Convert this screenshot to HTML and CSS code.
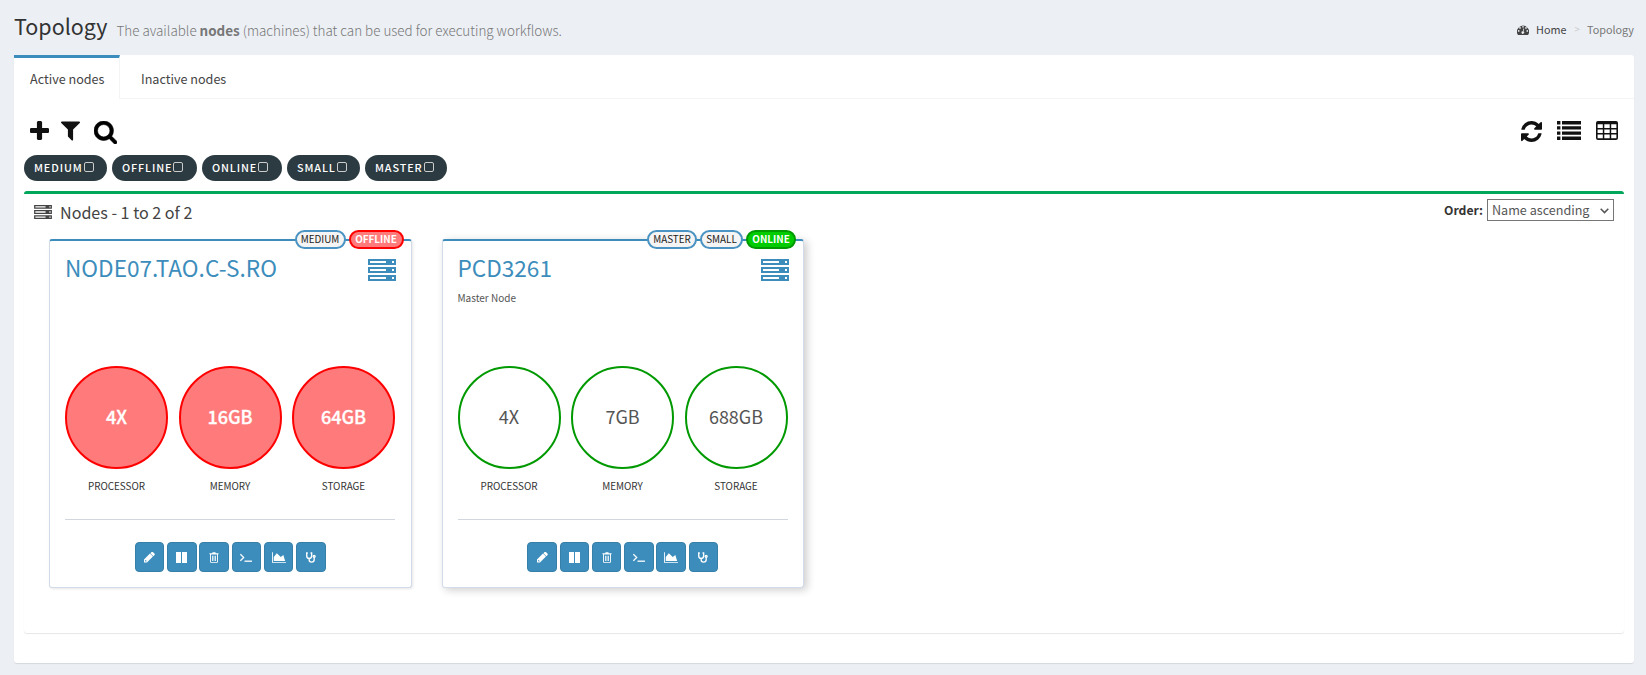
FILE: index.html
```html
<!DOCTYPE html>
<html lang="en">
<head>
<meta charset="utf-8">
<title>Topology</title>
<link rel="stylesheet" href="styles.css">
</head>
<body>
<svg class="sprite" aria-hidden="true">
  <symbol id="plus" viewBox="192 128 1408 1408"><path d="M1600 736v192q0 40-28 68t-68 28h-416v416q0 40-28 68t-68 28h-192q-40 0-68-28t-28-68v-416h-416q-40 0-68-28t-28-68v-192q0-40 28-68t68-28h416v-416q0-40 28-68t68-28h192q40 0 68 28t28 68v416h416q40 0 68 28t28 68z"/></symbol>
  <symbol id="filter" viewBox="192 256 1408 1408"><path d="M1595 295q17 41-14 70l-493 493v742q0 42-39 59-13 5-25 5-27 0-45-19l-256-256q-19-19-19-45v-486l-493-493q-31-29-14-70 17-39 59-39h1280q42 0 59 39z"/></symbol>
  <symbol id="search" viewBox="64 128 1664 1664"><path stroke="currentColor" stroke-width="40" d="M1216 832q0-185-131.5-316.500t-316.500-131.500-316.500 131.500-131.500 316.500 131.500 316.500 316.500 131.500 316.500-131.500 131.500-316.500zm512 832q0 52-38 90t-90 38q-54 0-90-38l-343-342q-179 124-399 124-143 0-273.500-55.500t-225-150-150-225-55.500-273.500 55.500-273.500 150-225 225-150 273.500-55.500 273.500 55.500 225 150 150 225 55.500 273.500q0 220-124 399l343 343q37 37 37 90z"/></symbol>
  <symbol id="refresh" viewBox="128 128 1536 1536"><path d="M1639 1056q0 5-1 7-64 268-268 434.500t-478 166.500q-146 0-282.500-55t-243.500-157l-129 129q-19 19-45 19t-45-19-19-45v-448q0-26 19-45t45-19h448q26 0 45 19t19 45-19 45l-137 137q71 66 161 102t187 36q134 0 250-65t186-179q11-17 53-117 8-23 30-23h192q13 0 22.500 9.500t9.500 22.500zm25-800v448q0 26-19 45t-45 19h-448q-26 0-45-19t-19-45 19-45l138-138q-148-137-349-137-134 0-250 65t-186 179q-11 17-53 117-8 23-30 23h-199q-13 0-22.500-9.500t-9.500-22.500v-7q65-268 270-434.500t480-166.500q146 0 284 55.500t245 156.500l130-129q19-19 45-19t45 19 19 45z"/></symbol>
  <symbol id="list" viewBox="0 0 24 19"><path d="M0 0h3.400v3.400H0zM0 5.200h3.400v3.400H0zM0 10.400h3.400v3.400H0zM0 15.600h3.400V19H0zM5 0h19v3.400H5zM5 5.200h19v3.400H5zM5 10.400h19v3.400H5zM5 15.600h19V19H5z"/></symbol>
  <symbol id="table" viewBox="0 0 22 19"><path fill-rule="evenodd" d="M2 0h18a2 2 0 0 1 2 2v15a2 2 0 0 1-2 2H2a2 2 0 0 1-2-2V2a2 2 0 0 1 2-2zM1.600 3.200v3.900h5.200V3.200zM8.300 3.200v3.900h5.400V3.200zM15.200 3.200v3.900h5.200V3.200zM1.600 8.400v3.600h5.200V8.400zM8.300 8.400v3.600h5.400V8.400zM15.200 8.400v3.600h5.200V8.400zM1.600 13.400v3.800h5.200v-3.800zM8.300 13.400v3.800h5.400v-3.800zM15.200 13.400v3.800h5.200v-3.800z"/></symbol>
  <symbol id="server" viewBox="0 0 28 22"><path fill-rule="evenodd" d="M0 0h28v6H0zM2 2v2h16V2zM24 2v2h2V2zM0 8h28v6H0zM2 10v2h16v-2zM24 10v2h2v-2zM0 16h28v6H0zM2 18v2h16v-2zM24 18v2h2v-2z"/></symbol>
  <symbol id="gauge" viewBox="0 0 12 10"><path fill-rule="evenodd" d="M1 10A6 6 0 1 1 11 10zM6 .900a.850.850 0 1 0 0 1.700.850.850 0 0 0 0-1.700zM3 2.100a.850.850 0 1 0 0 1.700.850.850 0 0 0 0-1.700zM9 2.100a.850.850 0 1 0 0 1.700.850.850 0 0 0 0-1.700zM1.700 5.100a.850.850 0 1 0 0 1.700.850.850 0 0 0 0-1.700zM10.300 5.100a.850.850 0 1 0 0 1.700.850.850 0 0 0 0-1.700zM6.500 3.400l-.700 2.800a1.300 1.300 0 1 0 .700.200l.700-2.800z"/></symbol>
  <symbol id="pencil" viewBox="128 256 1536 1408"><path d="M420 1536l80-80-150-150-80 80v70h80v80h70zM960 416l416 416-832 832h-416v-416zm683 96q0 53-37 90l-166 166-416-416 166-165q36-38 90-38 53 0 91 38l235 234q37 39 37 91z"/></symbol>
  <symbol id="columns" viewBox="0 0 11 11"><path d="M0 0h5v11H0zM6 0h5v11H6z"/></symbol>
  <symbol id="trash" viewBox="0 0 11 12"><path fill-rule="evenodd" d="M3.500 1.300L4 .300h3l.500 1H10.500v1.200H9.800v8.200c0 .8-.5 1.300-1.200 1.300H2.400c-.7 0-1.200-.5-1.200-1.300V2.500H.5V1.300zM2.200 2.600v8.200c0 .2.100.3.300.3h6c.2 0 .3-.1.300-.3V2.600zM3.300 4h.9v5.800h-.900zM5.050 4h.9v5.800h-.900zM6.800 4h.9v5.800h-.900z"/></symbol>
  <symbol id="terminal" viewBox="64 384 1664 1152"><path stroke="currentColor" stroke-width="50" d="M649 983l-466 466q-10 10-23 10t-23-10l-50-50q-10-10-10-23t10-23l393-393-393-393q-10-10-10-23t10-23l50-50q10-10 23-10t23 10l466 466q10 10 10 23t-10 23zm1079 457v64q0 14-9 23t-23 9h-960q-14 0-23-9t-9-23v-64q0-14 9-23t23-9h960q14 0 23 9t9 23z"/></symbol>
  <symbol id="chart" viewBox="0 128 2048 1536"><path d="M2048 1536v128h-2048v-1536h128v1408h1920zm-384-1024l256 896h-1664v-576l448-576 576 576z"/></symbol>
  <symbol id="stethoscope" viewBox="0 0 11 12"><g fill="none" stroke="currentColor" stroke-width="1.500"><path d="M2 1H.8v3.300C.8 6 1.900 7 3.500 7s2.700-1 2.700-2.700V1H5M3.500 7v1.800c0 1.400 1 2.300 2.600 2.300s2.900-.9 2.900-2.500V5.800"/><circle cx="9" cy="4.700" r="1.050"/></g></symbol>
</svg>

<header class="page-header">
  <h1>Topology</h1>
  <p>The available <b>nodes</b> (machines) that can be used for executing workflows.</p>
  <nav class="breadcrumb">
    <svg class="i-gauge"><use href="#gauge"/></svg><span class="home">Home</span><span class="sep">&gt;</span><span class="here">Topology</span>
  </nav>
</header>

<main class="panel">
  <div class="tabs">
    <div class="tab tab-active">Active nodes</div>
    <div class="tab tab-other">Inactive nodes</div>
  </div>
  <div class="toolbar">
    <svg class="i-plus"><use href="#plus"/></svg>
    <svg class="i-filter"><use href="#filter"/></svg>
    <svg class="i-search"><use href="#search"/></svg>
    <svg class="i-refresh"><use href="#refresh"/></svg>
    <svg class="i-list"><use href="#list"/></svg>
    <svg class="i-table"><use href="#table"/></svg>
  </div>
  <div class="pills">
    <div class="pill p-medium">MEDIUM<i></i></div>
    <div class="pill p-offline">OFFLINE<i></i></div>
    <div class="pill p-online">ONLINE<i></i></div>
    <div class="pill p-small">SMALL<i></i></div>
    <div class="pill p-master">MASTER<i></i></div>
  </div>
  <section class="box">
    <div class="box-header">
      <svg class="i-nodes"><use href="#server"/></svg>
      <h2>Nodes - 1 to 2 of 2</h2>
      <span class="order">Order:</span>
      <div class="select"><span>Name ascending</span><svg viewBox="0 0 9 6"><path d="M.7.8l3.800 3.800L8.300.8" fill="none" stroke="#555" stroke-width="1.500"/></svg></div>
    </div>
    <div class="cards">
      <article class="card offline">
        <div class="badges"><span class="w-medium">MEDIUM</span><span class="status w-offline">OFFLINE</span></div>
        <div class="card-head"><h3>NODE07.TAO.C-S.RO</h3><svg><use href="#server"/></svg></div>
        <p class="desc"></p>
        <div class="stats">
          <div><b>4X</b><span>PROCESSOR</span></div>
          <div><b>16GB</b><span>MEMORY</span></div>
          <div><b>64GB</b><span>STORAGE</span></div>
        </div>
        <div class="actions">
          <button><svg class="a-pencil"><use href="#pencil"/></svg></button>
          <button><svg class="a-columns"><use href="#columns"/></svg></button>
          <button><svg class="a-trash"><use href="#trash"/></svg></button>
          <button><svg class="a-terminal"><use href="#terminal"/></svg></button>
          <button><svg class="a-chart"><use href="#chart"/></svg></button>
          <button><svg class="a-steth"><use href="#stethoscope"/></svg></button>
        </div>
      </article>
      <article class="card online">
        <div class="badges"><span class="w-master">MASTER</span><span class="w-small">SMALL</span><span class="status w-online">ONLINE</span></div>
        <div class="card-head"><h3>PCD3261</h3><svg><use href="#server"/></svg></div>
        <p class="desc">Master Node</p>
        <div class="stats">
          <div><b>4X</b><span>PROCESSOR</span></div>
          <div><b>7GB</b><span>MEMORY</span></div>
          <div><b>688GB</b><span>STORAGE</span></div>
        </div>
        <div class="actions">
          <button><svg class="a-pencil"><use href="#pencil"/></svg></button>
          <button><svg class="a-columns"><use href="#columns"/></svg></button>
          <button><svg class="a-trash"><use href="#trash"/></svg></button>
          <button><svg class="a-terminal"><use href="#terminal"/></svg></button>
          <button><svg class="a-chart"><use href="#chart"/></svg></button>
          <button><svg class="a-steth"><use href="#stethoscope"/></svg></button>
        </div>
      </article>
    </div>
  </section>
</main>
</body>
</html>
```
FILE: styles.css
```css
* { box-sizing: border-box; }
body {
  margin: 0;
  height: 675px;
  overflow: hidden;
  background: #ecf0f5;
  color: #333;
  font-family: "Noto Sans CJK SC", "Noto Sans", sans-serif;
  font-size: 12.6px;
  line-height: 20px;
  white-space: nowrap;
}
h1, h2, h3, p { margin: 0; font-weight: 400; }
svg { display: block; fill: currentColor; flex: none; }
.sprite { position: absolute; width: 0; height: 0; }

.page-header { display: flex; height: 55px; padding: 12px 12px 0 14px; }
.page-header h1 { width: 102.5px; font-size: 21.5px; line-height: 28px; }
.page-header p { font-size: 13.43px; line-height: 36px; font-weight: 300; color: #777; }
.page-header b { font-weight: 700; }
.breadcrumb { display: flex; margin-left: auto; padding-top: 8px; font-size: 10.8px; line-height: 18px; color: #444; }
.i-gauge { width: 12px; height: 10px; margin: 5px 7px 0 0; }
.sep { margin: 0 7px 0 8px; color: #ccc; font-size: 10px; }
.here { color: #777; }

.panel {
  height: 608px;
  margin: 0 12px 0 14px;
  background: #fff;
  border-radius: 3px;
  box-shadow: 0 1px 1px rgba(0,0,0,.1);
}
.tabs { display: flex; height: 44px; border-bottom: 1px solid #f4f4f4; border-radius: 3px 3px 0 0; }
.tab { height: 44px; padding: 14px 15px 0 16px; color: #444; }
.tab-active { width: 106px; padding-top: 11px; background: #fff; border-top: 3px solid #3c8dbc; border-right: 1px solid #f4f4f4; }
.tab-other { padding-left: 21px; }

.toolbar { display: flex; height: 56px; padding: 22px 16px 0; color: #111; }
.i-plus { width: 19px; height: 19px; margin-right: 12px; }
.i-filter { width: 19px; height: 20px; margin-right: 14px; }
.i-search { width: 23px; height: 23px; color: #000; }
.i-refresh { width: 21px; height: 21px; margin-left: auto; }
.i-list { width: 24px; height: 19px; margin-left: 15px; }
.i-table { width: 22px; height: 19px; margin-left: 15px; }

.pills { display: flex; gap: 5px; padding-left: 10px; }
.pill { display: flex; height: 26px; padding-left: 10px; border-radius: 13px; background: #2c3b41; color: #fff; font-size: 10.8px; line-height: 25px; font-weight: 500; letter-spacing: .9px; }
.pill i { width: 10px; height: 10px; margin: 7px 0 0 1px; border: 1.500px solid #ccc; border-radius: 2px; }
.p-medium { width: 83px; }
.p-offline { width: 85px; }
.p-online { width: 80px; }
.p-small { width: 73px; }
.p-master { width: 82px; }

.box { height: 442px; margin: 10px 10px 0; border-top: 3px solid #00a65a; border-radius: 3px; box-shadow: 0 1px 1px rgba(0,0,0,.1); }
.box-header { display: flex; height: 45px; padding: 0 10px; color: #444; }
.i-nodes { width: 18px; height: 14px; margin-top: 11px; }
.box-header h2 { margin-left: 8px; font-size: 16.1px; line-height: 36px; }
.order { margin: 6px 4px 0 auto; font-size: 12.2px; font-weight: 700; color: #333; }
.select { display: flex; justify-content: space-between; width: 127px; height: 22px; margin-top: 5px; padding: 0 4px 0 4px; border: 1px solid #767676; font-size: 12.600px; line-height: 20px; color: #555; }
.select svg { width: 9px; height: 6px; margin-top: 8px; }

.cards { display: flex; gap: 30px; padding-left: 25px; }
.card { position: relative; width: 362.500px; height: 349px; padding: 18px 15.500px 0 15px; background: #fff; border: 1px solid #d2dbe8; border-top: 2px solid #3c8dbc; border-radius: 3px; }
.offline { box-shadow: 1px 1px 3px rgba(0,0,0,.1); }
.online { box-shadow: 3px 2px 9px rgba(0,0,0,.2); }
.badges { position: absolute; top: -11px; right: 7px; display: flex; gap: 3px; }
.badges span { height: 19px; border: 2px solid #4a93c2; border-radius: 10px; background: #f4f4f4; color: #222; font-size: 9.900px; line-height: 14px; text-align: center; }
.badges .status { font-weight: 700; color: #fff; }
.offline .badges .status { background: #ff7b7b; border-color: #f00; }
.online .badges .status { background: #0c0; border-color: #090; }
.badges .w-medium { width: 51px; }
.badges .w-offline { width: 55px; }
.badges .w-master { width: 50px; }
.badges .w-small { width: 43px; }
.badges .w-online { width: 50px; }
.card-head { display: flex; justify-content: space-between; height: 32px; color: #3c8dbc; }
.card-head h3 { font-size: 22.600px; line-height: 17px; }
.card-head svg { width: 28px; height: 22px; margin-right: -1px; }
.desc { height: 75px; font-size: 10px; line-height: 14px; color: #555; }
.stats { display: flex; justify-content: space-between; height: 154px; border-bottom: 1px solid #d2d6de; }
.stats div { width: 103px; text-align: center; }
.stats b { display: block; height: 103px; border: 2px solid #090; border-radius: 50%; font-size: 18px; line-height: 97px; font-weight: 400; color: #555; }
.offline .stats b { background: #ff7b7b; border-color: #f00; color: #fff; font-weight: 500; -webkit-text-stroke: .3px #fff; }
.stats span { display: block; margin-top: 9px; font-size: 9.900px; line-height: 17px; }
.actions { display: flex; justify-content: center; gap: 2.800px; padding: 22px 0 0 .500px; }
.actions button { display: flex; align-items: center; justify-content: center; width: 29.500px; height: 30px; padding: 0; color: #fff; background: #3c8dbc; border: 1px solid #367fa9; border-radius: 4px; }
.a-pencil { width: 11px; height: 11px; }
.a-columns { width: 11px; height: 11px; }
.a-trash { width: 10px; height: 11px; }
.a-terminal { width: 12px; height: 9px; }
.a-chart { width: 14px; height: 11px; }
.a-steth { width: 10px; height: 11px; }
```
